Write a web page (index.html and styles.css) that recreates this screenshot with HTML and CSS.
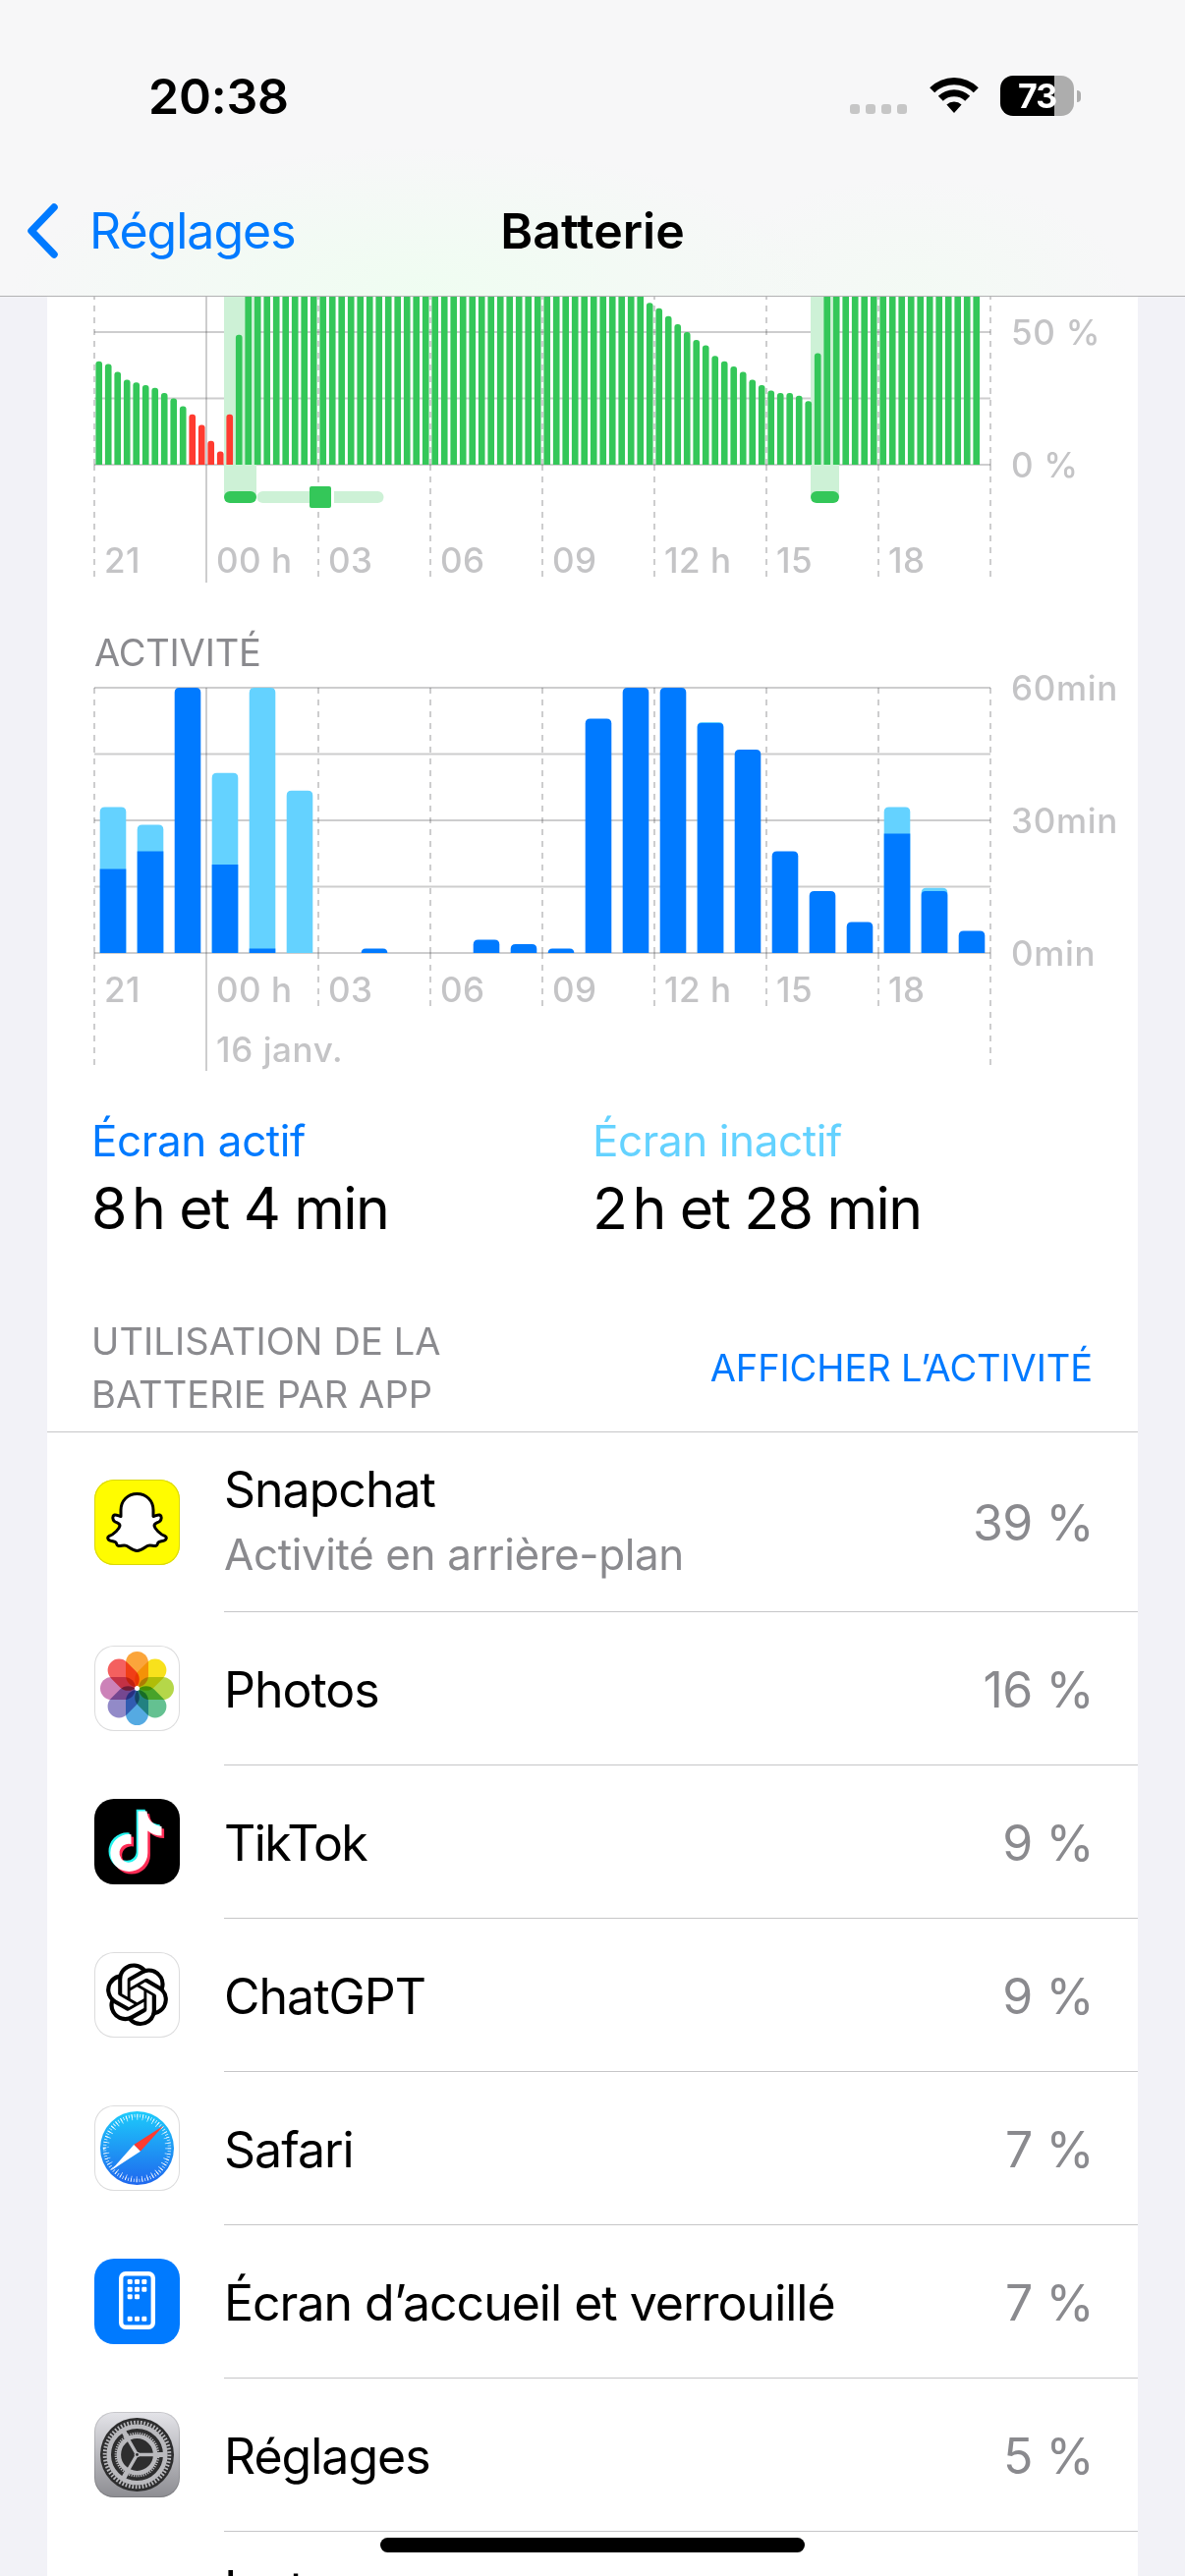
FILE: index.html
```html
<!DOCTYPE html>
<html lang="fr">
<head>
  <meta charset="utf-8">
  <title>Batterie</title>
  <link rel="stylesheet" href="styles.css">
</head>
<body>
  <header class="header">
    <div class="status-bar">
      <div class="time">20:38</div>
      <div class="status-icons">
        <div class="signal"><i></i><i></i><i></i><i></i></div>
        <svg class="wifi" width="52" height="38" viewBox="0 0 52 38">
          <path d="M1.2 11.2a35.5 35.5 0 0 1 49.6 0l-5 5a28.5 28.5 0 0 0-39.6 0z"/>
          <path d="M9.8 19.8a23.3 23.3 0 0 1 32.4 0l-5 5a16.2 16.2 0 0 0-22.4 0z"/>
          <path d="M18.4 28.6a11 11 0 0 1 15.2 0L26 37z"/>
        </svg>
        <div class="battery"><span class="battery-level">73</span></div>
        <div class="battery-cap"></div>
      </div>
    </div>
    <nav class="nav">
      <a class="back">
        <svg width="34" height="58" viewBox="0 0 34 58"><path d="M29 5L6 29l23 24"/></svg>
        <span>Réglages</span>
      </a>
      <h1>Batterie</h1>
    </nav>
  </header>

  <main class="card">
    <svg class="chart" id="level-chart" width="1110" height="338" viewBox="48 302 1110 338"></svg>
    <h2 class="chart-title">ACTIVITÉ</h2>
    <svg class="chart activity-chart" id="activity-chart" width="1110" height="424" viewBox="48 686 1110 424"></svg>

    <section class="stats">
      <div class="stat">
        <div class="stat-label active">Écran actif</div>
        <div class="stat-value">8<span class="thin"></span>h et 4 min</div>
      </div>
      <div class="stat">
        <div class="stat-label idle">Écran inactif</div>
        <div class="stat-value">2<span class="thin"></span>h et 28 min</div>
      </div>
    </section>

    <div class="list-header">
      <h2>UTILISATION DE LA<br>BATTERIE PAR APP</h2>
      <a>AFFICHER L’ACTIVITÉ</a>
    </div>

    <ul class="apps">
      <li class="app tall">
        <svg class="icon snapchat" viewBox="0 0 87 87">
          <path fill="#fff" stroke="#000" stroke-width="3" stroke-linejoin="round" d="M43.5 14.5C34 14.5 27 21.5 27 31V37.5C25 37 22.5 35.5 20.5 36C18 37 18.5 41 20.5 42.5C22 44 26 44 26 47C25.5 50 20 56 15 57.5C13 58.5 13.5 61 15.5 61.8C18 62.8 21 63 22 64C23 65.5 22.5 67 24 67.3C27 68 30 66 33 67.5C36.5 69.5 39 72.5 43.5 72.5C48 72.5 50.5 69.5 54 67.5C57 66 60 68 63 67.3C64.5 67 64 65.5 65 64C66 63 69 62.8 71.5 61.8C73.5 61 74 58.5 72 57.5C67 56 61.5 50 61 47C61 44 65 44 66.5 42.5C68.5 41 69 37 66.5 36C64.5 35.5 62 37 60 37.5V31C60 21.5 53 14.5 43.5 14.5Z"/>
        </svg>
        <div class="info">
          <div class="names">
            <div class="name">Snapchat</div>
            <div class="detail">Activité en arrière-plan</div>
          </div>
          <div class="percent">39 %</div>
        </div>
      </li>
      <li class="app">
        <svg class="icon white" viewBox="0 0 87 87">
          <g class="petals" transform="translate(43.5 43.5)">
            <rect x="-11.5" y="-37.5" width="23" height="36" rx="11.5" fill="#fba53b"/>
            <rect x="-11.5" y="-37.5" width="23" height="36" rx="11.5" fill="#f8e11c" transform="rotate(45)"/>
            <rect x="-11.5" y="-37.5" width="23" height="36" rx="11.5" fill="#b5d749" transform="rotate(90)"/>
            <rect x="-11.5" y="-37.5" width="23" height="36" rx="11.5" fill="#64c191" transform="rotate(135)"/>
            <rect x="-11.5" y="-37.5" width="23" height="36" rx="11.5" fill="#55aae2" transform="rotate(180)"/>
            <rect x="-11.5" y="-37.5" width="23" height="36" rx="11.5" fill="#928ac8" transform="rotate(225)"/>
            <rect x="-11.5" y="-37.5" width="23" height="36" rx="11.5" fill="#cc82b8" transform="rotate(270)"/>
            <rect x="-11.5" y="-37.5" width="23" height="36" rx="11.5" fill="#f4605f" transform="rotate(315)"/>
          </g>
          <circle cx="43.5" cy="43.5" r="2.5" fill="#fff"/>
        </svg>
        <div class="info"><div class="name">Photos</div><div class="percent">16 %</div></div>
      </li>
      <li class="app">
        <svg class="icon black" viewBox="0 0 87 87">
          <defs>
            <path id="note" d="M44.5 12.5H53.5C54 21 60 27.5 68.5 28V37.5C63 37.5 58 35.5 54.3 32.5V55A19 19 0 1 1 35.3 36L37.5 36.2V46A9.5 9.5 0 1 0 44.5 55Z"/>
          </defs>
          <use href="#note" x="-1.8" y="-1.8" fill="#25f4ee"/>
          <use href="#note" x="2.6" y="2.6" fill="#fe2c55"/>
          <use href="#note" fill="#fff"/>
        </svg>
        <div class="info"><div class="name tight">TikTok</div><div class="percent">9 %</div></div>
      </li>
      <li class="app">
        <svg class="icon white" viewBox="0 0 87 87">
          <path transform="translate(11.7 11.5) scale(2.65)" d="M22.2819 9.8211a5.9847 5.9847 0 0 0-.5157-4.9108 6.0462 6.0462 0 0 0-6.5098-2.9A6.0651 6.0651 0 0 0 4.9807 4.1818a5.9847 5.9847 0 0 0-3.9977 2.9 6.0462 6.0462 0 0 0 .7427 7.0966 5.98 5.98 0 0 0 .511 4.9107 6.051 6.051 0 0 0 6.5146 2.9001A5.9847 5.9847 0 0 0 13.2599 24a6.0557 6.0557 0 0 0 5.7718-4.2058 5.9894 5.9894 0 0 0 3.9977-2.9001 6.0557 6.0557 0 0 0-.7475-7.0729zm-9.022 12.6081a4.4755 4.4755 0 0 1-2.8764-1.0408l.1419-.0804 4.7783-2.7582a.7948.7948 0 0 0 .3927-.6813v-6.7369l2.02 1.1686a.071.071 0 0 1 .038.052v5.5826a4.504 4.504 0 0 1-4.4945 4.4944zm-9.6607-4.1254a4.4708 4.4708 0 0 1-.5346-3.0137l.142.0852 4.783 2.7582a.7712.7712 0 0 0 .7806 0l5.8428-3.3685v2.3324a.0804.0804 0 0 1-.0332.0615L9.74 19.9502a4.4992 4.4992 0 0 1-6.1408-1.6464zM2.3408 7.8956a4.485 4.485 0 0 1 2.3655-1.9728V11.6a.7664.7664 0 0 0 .3879.6765l5.8144 3.3543-2.0201 1.1685a.0757.0757 0 0 1-.071 0l-4.8303-2.7865A4.504 4.504 0 0 1 2.3408 7.872zm16.5963 3.8558L13.1038 8.364 15.1192 7.2a.0757.0757 0 0 1 .071 0l4.8303 2.7913a4.4944 4.4944 0 0 1-.6765 8.1042v-5.6772a.79.79 0 0 0-.407-.667zm2.0107-3.0231l-.142-.0852-4.7735-2.7818a.7759.7759 0 0 0-.7854 0L9.409 9.2297V6.8974a.0662.0662 0 0 1 .0284-.0615l4.8303-2.7866a4.4992 4.4992 0 0 1 6.6802 4.66zM8.3065 12.863l-2.02-1.1638a.0804.0804 0 0 1-.038-.0567V6.0742a4.4992 4.4992 0 0 1 7.3757-3.4537l-.142.0805L8.704 5.459a.7948.7948 0 0 0-.3927.6813zm1.0976-2.3654l2.602-1.4998 2.6069 1.4998v2.9994l-2.5974 1.4997-2.6067-1.4997Z"/>
        </svg>
        <div class="info"><div class="name">ChatGPT</div><div class="percent">9 %</div></div>
      </li>
      <li class="app">
        <svg class="icon white" viewBox="0 0 87 87">
          <defs>
            <linearGradient id="sea" x1="0" y1="0" x2="0" y2="1">
              <stop offset="0" stop-color="#1dcbfb"/>
              <stop offset="1" stop-color="#1f67ee"/>
            </linearGradient>
          </defs>
          <circle cx="43.5" cy="43.5" r="37.5" fill="url(#sea)"/>
          <g fill="none" stroke="#fff" stroke-opacity=".85">
            <circle cx="43.5" cy="43.5" r="33" stroke-width="3.5" pathLength="72" stroke-dasharray=".28 .72"/>
            <circle cx="43.5" cy="43.5" r="31.7" stroke-width="6" pathLength="36" stroke-dasharray=".14 .86"/>
          </g>
          <path fill="#ff3b30" d="M70.3 20.7L40.2 40L46.9 46.7Z"/>
          <path fill="#fff" d="M17 66.3L40.2 40L46.9 46.7Z"/>
        </svg>
        <div class="info"><div class="name">Safari</div><div class="percent">7 %</div></div>
      </li>
      <li class="app">
        <svg class="icon blue" viewBox="0 0 87 87">
          <rect x="27.2" y="15.2" width="32.6" height="54.6" rx="4.5" fill="none" stroke="#fff" stroke-width="4.4"/>
          <g id="home-dots" fill="#fff"></g>
        </svg>
        <div class="info"><div class="name">Écran d’accueil et verrouillé</div><div class="percent">7 %</div></div>
      </li>
      <li class="app">
        <svg class="icon gear" viewBox="0 0 87 87">
          <g fill="none" stroke="#b9b9bd">
            <circle cx="43.5" cy="43.5" r="37.5" fill="#2d2d2e" stroke="none"/>
            <circle cx="43.5" cy="43.5" r="32.8" stroke-width="4" pathLength="60" stroke-dasharray=".5 .5"/>
            <circle cx="43.5" cy="43.5" r="28.8" stroke-width="4.6"/>
            <circle cx="43.5" cy="43.5" r="21.6" stroke-width="2.6" pathLength="56" stroke-dasharray=".5 .5"/>
            <circle cx="43.5" cy="43.5" r="18.6" stroke-width="4.4"/>
            <path stroke-width="3.4" d="M43.5 43.5H70M43.5 43.5L30.3 20.6M43.5 43.5L30.3 66.4"/>
            <path stroke-width="5" d="M64 43.5H72M33.2 25.7L29.5 19.3M33.2 61.3L29.5 67.7"/>
          </g>
          <circle cx="43.5" cy="43.5" r="2.8" fill="#b9b9bd"/>
          <circle cx="43.5" cy="43.5" r="1.4" fill="#2d2d2e"/>
        </svg>
        <div class="info"><div class="name">Réglages</div><div class="percent">5 %</div></div>
      </li>
      <li class="app tall">
        <svg class="icon white" viewBox="0 0 87 87"></svg>
        <div class="info">
          <div class="names">
            <div class="name">Instagram</div>
          </div>
        </div>
      </li>
    </ul>
  </main>
  <div class="home-indicator"></div>

  <script src="charts.js"></script>
</body>
</html>
```
FILE: styles.css
```css
* {
  box-sizing: border-box;
}

body {
  margin: 0;
  height: 2622px;
  overflow: hidden;
  background: #f2f2f7;
  color: #000;
  font-family: Inter, "Liberation Sans", sans-serif;
  position: relative;
}

h1, h2, ul {
  margin: 0;
  padding: 0;
  font-weight: 400;
}

/* header */
.header {
  height: 302px;
  background:
    radial-gradient(ellipse 420px 150px at 430px 300px, #effdf1, rgba(239, 253, 241, 0)),
    radial-gradient(ellipse 220px 120px at 930px 300px, #f3faf4, rgba(243, 250, 244, 0)),
    #f7f7f8;
  border-bottom: 1px solid #b2b2b3;
}

.status-bar {
  display: flex;
  justify-content: space-between;
  height: 205px;
  padding: 68px 106px 0 151px;
}

.time {
  font-size: 50px;
  line-height: 60px;
  font-weight: 600;
  letter-spacing: -0.2px;
}

.status-icons {
  display: flex;
  height: 60px;
  align-items: flex-start;
}

.signal {
  display: flex;
  gap: 6px;
  margin: 38px 22px 0 0;
}

.signal i {
  width: 10px;
  height: 10px;
  border-radius: 3px;
  background: #c6c6c6;
}

.wifi {
  margin: 10px 21px 0 0;
}

.battery {
  width: 75px;
  height: 41px;
  margin-top: 9px;
  border-radius: 13px;
  background: linear-gradient(to right, #000 55px, #adadad 55px);
  color: #fff;
  text-align: center;
}

.battery-level {
  font-size: 34px;
  line-height: 41px;
  font-weight: 700;
  letter-spacing: -1px;
}

.battery-cap {
  width: 4px;
  height: 12px;
  margin: 24px 0 0 3px;
  border-radius: 0 4px 4px 0;
  background: #adadad;
}

.nav {
  display: grid;
  grid-template-columns: 1fr auto 1fr;
  line-height: 60px;
  font-size: 50px;
}

.nav h1 {
  font-size: 50px;
  font-weight: 600;
  letter-spacing: 0;
}

.back {
  display: flex;
  align-items: center;
  color: #007aff;
  padding-left: 26px;
  letter-spacing: -1px;
}

.back svg {
  margin-right: 31px;
  fill: none;
  stroke: #007aff;
  stroke-width: 7.5;
  stroke-linecap: round;
  stroke-linejoin: round;
}

/* charts */
.card {
  width: 1110px;
  height: 2320px;
  margin: 0 48px;
  background: #fff;
  overflow: hidden;
}

.chart {
  display: block;
}

.activity-chart {
  overflow: visible;
}

.chart text {
  fill: #c4c4c6;
  font-size: 35px;
  font-weight: 500;
}

.chart .line {
  fill: none;
  stroke: rgba(60, 60, 67, .26);
  stroke-width: 2;
}

.chart .dashed {
  stroke-dasharray: 6 6;
}

.green { fill: #34c759; }
.light-green { fill: #cdf1d6; }
.red { fill: #ff3b30; }
.dark { fill: #007aff; }
.light { fill: #64d2ff; }

.chart-title {
  padding: 1px 0 0 48px;
  height: 46px;
  font-size: 38px;
  line-height: 46px;
  color: #8a8a8e;
  letter-spacing: -0.2px;
  white-space: nowrap;
}

/* screen time */
.stats {
  display: grid;
  grid-template-columns: 510px 1fr;
  padding: 24px 0 0 45px;
  height: 228px;
}

.stat-label {
  font-size: 44px;
  line-height: 54px;
  letter-spacing: -0.4px;
}

.active { color: #007aff; }
.idle { color: #64d2ff; }

.stat-value {
  margin-top: 7px;
  font-size: 59px;
  line-height: 70px;
  letter-spacing: -1.6px;
}

.thin {
  display: inline-block;
  width: 6px;
}

/* list */
.list-header {
  display: flex;
  justify-content: space-between;
  align-items: center;
  height: 120px;
  padding: 0 46px 12px 45px;
  border-bottom: 1px solid #c6c6c8;
  font-size: 38px;
  line-height: 54px;
}

.list-header h2 {
  font-size: 38px;
  color: #8a8a8e;
  letter-spacing: 0.1px;
}

.list-header a {
  color: #007aff;
  letter-spacing: -0.1px;
}

.apps {
  list-style: none;
}

.app {
  display: flex;
  align-items: center;
  height: 156px;
  padding-left: 48px;
}

.app.tall {
  height: 183px;
}

.icon {
  width: 87px;
  height: 87px;
  border-radius: 20px;
  flex: none;
  margin: 0 45px 1px 0;
}

.snapchat {
  background: #fffc00;
  box-shadow: inset 0 0 0 1px #d9d70c;
}

.white {
  background: #fff;
  box-shadow: inset 0 0 0 1px #dcdcdd;
}

.black { background: #000; }
.blue { background: #007aff; }

.gear {
  background: linear-gradient(#e4e4e9, #8d8d92);
  box-shadow: inset 0 0 0 1px rgba(0, 0, 0, .12);
}

.petals rect {
  mix-blend-mode: multiply;
}

.info {
  flex: 1;
  height: 100%;
  display: flex;
  align-items: center;
  justify-content: space-between;
  padding: 2px 45px 0 0;
  border-bottom: 1px solid #c6c6c8;
  white-space: nowrap;
}

.name, .percent {
  font-size: 50px;
  line-height: 60px;
  letter-spacing: -1px;
}

.name.tight {
  letter-spacing: -1.6px;
}

.percent {
  color: #8a8a8e;
  letter-spacing: -0.5px;
}

.detail {
  margin-top: 9px;
  font-size: 44px;
  line-height: 54px;
  color: #8a8a8e;
  letter-spacing: -0.4px;
}

.names {
  height: 123px;
  margin-top: -6px;
}

.home-indicator {
  position: absolute;
  left: 387px;
  bottom: 24px;
  width: 432px;
  height: 15px;
  border-radius: 8px;
  background: #000;
}
```
FILE: charts.js
```js
const LEFT = 96;
const RIGHT = 1008;
const HOUR = 38;

// battery level every 15 minutes, in percent
const levels = [39, 38, 35, 32, 31, 30, 29, 27, 25, 22, 19, 15, 9, 5, 19, 49];
for (let i = 16; i < 58; i++) levels.push(100);
levels.push(64, 61, 59, 56, 53, 50, 47, 45, 41, 39, 37, 35, 32, 30, 28, 27, 27, 26, 24, 42);
for (let i = 78; i < 95; i++) levels.push(100);

// minutes per hour: [total, screen on]
const activity = [
  [33, 19], [29, 23], [60, 60], [40.7, 20], [60, 1], [36.7, 0],
  [0, 0], [1, 1], [0, 0], [0, 0], [3, 3], [2, 2],
  [1, 1], [53, 53], [60, 60], [60, 60], [52.2, 52], [46, 46],
  [23, 23], [14, 14], [7, 7], [33, 27], [14.7, 14], [5, 5]
];

const hours = ['21', '00 h', '03', '06', '09', '12 h', '15', '18'];

function rect(x, y, w, h, cls, r = 0) {
  return `<rect x="${x}" y="${y}" width="${w}" height="${h}" rx="${r}" class="${cls}"/>`;
}

function bar(x, bottom, w, h, r, cls) {
  r = Math.min(r, h);
  return `<path class="${cls}" d="M${x} ${bottom}v${r - h}q0 ${-r} ${r} ${-r}h${w - 2 * r}q${r} 0 ${r} ${r}v${h - r}z"/>`;
}

function text(x, y, label, spacing) {
  return `<text x="${x}" y="${y}" letter-spacing="${spacing}">${label}</text>`;
}

function grid(rows, top, end, solidEnd, edgeEnd, labelY) {
  const base = rows[rows.length - 1];
  let out = '';
  rows.forEach(y => out += `<path class="line" d="M${LEFT} ${y}H${RIGHT}"/>`);
  for (let i = 0; i <= 8; i++) {
    const x = LEFT + i * HOUR * 3;
    if (i === 1) {
      out += `<path class="line" d="M${x} ${top}V${solidEnd}"/>`;
    } else {
      // dashes start again under the base line
      const bottom = i === 0 || i === 8 ? edgeEnd : end;
      out += `<path class="line dashed" d="M${x} ${top}V${base}M${x} ${base}V${bottom}"/>`;
    }
    if (hours[i]) out += text(x + 10, labelY, hours[i], 0.5);
  }
  return out;
}

function drawLevels() {
  let out = grid([338, 405.5, 473], 203, 587, 593, 587, 583);
  out += rect(228, 290, 33, 216, 'light-green') + rect(825, 290, 29, 216, 'light-green');
  out += rect(261.5, 500, 129, 12, 'light-green', 6);
  out += rect(228, 500, 33, 12, 'green', 6) + rect(825, 500, 29, 12, 'green', 6);
  out += '<rect x="315" y="495" width="25" height="22" fill="#fff"/>' + rect(315, 495, 22, 22, 'green', 2);
  levels.forEach((v, i) => {
    const red = i >= 10 && i <= 14;
    out += bar(LEFT + 1.4 + i * 9.5, 473, 6.65, v * 2.7, 3, red ? 'red' : 'green');
  });
  out += text(1029, 351, '50 %', 0.7) + text(1029, 486, '0 %', 0.7);
  document.getElementById('level-chart').innerHTML = out;
}

function drawActivity() {
  let out = grid([700, 767.5, 835, 902.5, 970], 700, 1024, 1090, 1084, 1020);
  activity.forEach(([total, on], i) => {
    const x = LEFT + 5.7 + i * HOUR;
    if (total > on) {
      out += bar(x, 970, 26.6, total * 4.5, 5, 'light');
      if (total - on > 1) out += rect(x, 970 - on * 4.5, 26.6, on * 4.5, 'dark');
      else out += bar(x, 970, 26.6, on * 4.5, 4, 'dark');
    } else if (on) {
      out += bar(x, 970, 26.6, on * 4.5, 5, 'dark');
    }
  });
  out += text(220, 1081, '16 janv.', 0.6);
  out += text(1029, 713, '60min', 0.7) + text(1029, 848, '30min', 0.7) + text(1029, 983, '0min', 0.7);
  document.getElementById('activity-chart').innerHTML = out;
}

function drawHomeDots() {
  let out = '';
  [21, 28.7, 36.3, 58.7].forEach((y, row) => {
    for (let col = 0; col < 3; col++) {
      if (row === 2 && col === 2) continue;
      out += `<rect x="${33.7 + col * 7.3}" y="${y}" width="5" height="5" rx="1.2"/>`;
    }
  });
  document.getElementById('home-dots').innerHTML = out;
}

drawLevels();
drawActivity();
drawHomeDots();
```
